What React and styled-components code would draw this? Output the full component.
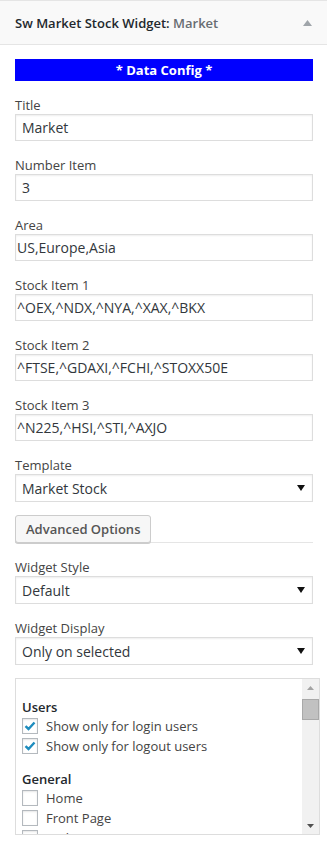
import React from 'react';
import styled, { createGlobalStyle } from 'styled-components';

const GlobalStyle = createGlobalStyle`
    html, body {
        margin: 0;
        padding: 0;
        background: #fff;
        font-family: "Open Sans", "Liberation Sans", sans-serif;
        color: #444;
    }
    * { box-sizing: border-box; }
`

const Widget = styled.div`
    width: 327px;
    background: #fff;
`

const Header = styled.div`
    height: 45px;
    display: flex;
    align-items: center;
    justify-content: space-between;
    padding: 0 15px;
    background: #f9f9f9;
    border-top: 1px solid #e5e5e5;
    border-bottom: 1px solid #e5e5e5;
`

const HeaderTitle = styled.h3`
    margin: 0;
    font-size: 13px;
    font-weight: 600;
    color: #23282d;
    line-height: 20px;
`

const TitleSuffix = styled.span`
    color: #686d72;
`

const Body = styled.div`
    padding: 14px 14px 0 15px;
`

const Banner = styled.div`
    height: 22px;
    background: #0000ff;
    color: #fff;
    font-size: 13px;
    font-weight: 700;
    text-align: center;
    line-height: 22px;
    margin-bottom: 15px;
`

const Field = styled.div`
    margin-bottom: ${p => p.$gap ?? 15}px;
`

const Label = styled.label`
    display: block;
    font-size: 13px;
    line-height: 18px;
    color: #444;
`

const Input = styled.input`
    display: block;
    width: 100%;
    height: 27px;
    margin: 0;
    padding: 0 ${p => p.$pad}px;
    border: 1px solid #ddd;
    box-shadow: inset 0 1px 2px rgba(0,0,0,0.07);
    background: #fff;
    font-family: inherit;
    font-size: 14px;
    color: #32373c;
    outline: none;
`

const SelectWrap = styled.div`
    position: relative;
`

const Select = styled.select`
    display: block;
    width: 100%;
    height: 28px;
    margin: 0;
    padding: 0 6px;
    border: 1px solid #ddd;
    border-radius: 0;
    box-shadow: inset 0 1px 2px rgba(0,0,0,0.07);
    background: #fff;
    font-family: inherit;
    font-size: 14px;
    color: #32373c;
    appearance: none;
    outline: none;
`

const Caret = styled.svg`
    position: absolute;
    right: 8px;
    top: 11px;
    pointer-events: none;
`

const ButtonRow = styled.div`
    border-bottom: 1px solid #e5e5e5;
    margin-bottom: 15px;
`

const Button = styled.button`
    display: block;
    height: 28px;
    margin-bottom: -1px;
    padding: 0 10px;
    border: 1px solid #ccc;
    border-radius: 3px;
    background: #f7f7f7;
    box-shadow: 0 1px 0 #ccc;
    font-family: inherit;
    font-size: 13px;
    font-weight: 600;
    color: #555;
`

const ListBox = styled.div`
    display: flex;
    height: 157px;
    width: 305px;
    border: 1px solid #ddd;
    overflow: hidden;
`

const ListContent = styled.div`
    flex: 1;
    padding: 19px 0 0 6px;
    overflow: hidden;
`

const GroupTitle = styled.div`
    font-size: 13px;
    font-weight: 600;
    line-height: 18px;
    color: #23282d;
    margin-top: ${p => p.$first ? 0 : 14}px;
`

const CheckRow = styled.label`
    display: flex;
    align-items: center;
    height: 20px;
    font-size: 13px;
    color: #444;
`

const Box = styled.span`
    width: 16px;
    height: 16px;
    margin-right: 8px;
    border: 1px solid #b4b9be;
    box-shadow: inset 0 1px 2px rgba(0,0,0,0.1);
    background: #fff;
    display: flex;
    align-items: center;
    justify-content: center;
    flex-shrink: 0;
`

const Scrollbar = styled.div`
    width: 17px;
    background: #f1f1f1;
    display: flex;
    flex-direction: column;
    align-items: center;
`

const ArrowCell = styled.div`
    height: 17px;
    width: 100%;
    display: flex;
    align-items: center;
    justify-content: center;
`

const Thumb = styled.div`
    width: 17px;
    height: 21px;
    background: #c1c1c1;
    border: 1px solid #a9a9a9;
    margin-top: 3px;
`

const Track = styled.div`
    flex: 1;
`

function Check({ checked }) {
    return (
        <Box>
            {checked && (
                <svg width="12" height="10" viewBox="0 0 12 10">
                    <path d="M1.5 5.2 L4.5 8 L10.5 1.5" fill="none" stroke="#1e8cbe" strokeWidth="2.4" strokeLinejoin="miter" />
                </svg>
            )}
        </Box>
    )
}

function Dropdown({ value }) {
    return (
        <SelectWrap>
            <Select defaultValue={value}>
                <option>{value}</option>
            </Select>
            <Caret width="8" height="6" viewBox="0 0 8 6">
                <path d="M0 0 L8 0 L4 6 Z" fill="#111" />
            </Caret>
        </SelectWrap>
    )
}

const fields = [
    { label: 'Title', value: 'Market', pad: 6 },
    { label: 'Number Item', value: '3', pad: 6 },
    { label: 'Area', value: 'US,Europe,Asia', pad: 1 },
    { label: 'Stock Item 1', value: '^OEX,^NDX,^NYA,^XAX,^BKX', pad: 1 },
    { label: 'Stock Item 2', value: '^FTSE,^GDAXI,^FCHI,^STOXX50E', pad: 1 },
    { label: 'Stock Item 3', value: '^N225,^HSI,^STI,^AXJO', pad: 1 },
]

export default function App() {
    return (
        <Widget>
            <GlobalStyle />
            <Header>
                <HeaderTitle>Sw Market Stock Widget: <TitleSuffix>Market</TitleSuffix></HeaderTitle>
                <svg width="9" height="6" viewBox="0 0 9 6">
                    <path d="M0 6 L4.5 0 L9 6 Z" fill="#a0a5aa" />
                </svg>
            </Header>
            <Body>
                <Banner>* Data Config *</Banner>
                {fields.map(f => (
                    <Field key={f.label}>
                        <Label>{f.label}</Label>
                        <Input defaultValue={f.value} $pad={f.pad} />
                    </Field>
                ))}
                <Field $gap={13}>
                    <Label>Template</Label>
                    <Dropdown value="Market Stock" />
                </Field>
                <ButtonRow>
                    <Button>Advanced Options</Button>
                </ButtonRow>
                <Field>
                    <Label>Widget Style</Label>
                    <Dropdown value="Default" />
                </Field>
                <Field $gap={13}>
                    <Label>Widget Display</Label>
                    <Dropdown value="Only on selected" />
                </Field>
                <ListBox>
                    <ListContent>
                        <GroupTitle $first>Users</GroupTitle>
                        <CheckRow><Check checked />Show only for login users</CheckRow>
                        <CheckRow><Check checked />Show only for logout users</CheckRow>
                        <GroupTitle>General</GroupTitle>
                        <CheckRow><Check />Home</CheckRow>
                        <CheckRow><Check />Front Page</CheckRow>
                        <CheckRow><Check />Archives</CheckRow>
                    </ListContent>
                    <Scrollbar>
                        <ArrowCell>
                            <svg width="7" height="4" viewBox="0 0 7 4"><path d="M0 4 L3.5 0 L7 4 Z" fill="#a3a3a3" /></svg>
                        </ArrowCell>
                        <Thumb />
                        <Track />
                        <ArrowCell>
                            <svg width="7" height="4" viewBox="0 0 7 4"><path d="M0 0 L7 0 L3.5 4 Z" fill="#505050" /></svg>
                        </ArrowCell>
                    </Scrollbar>
                </ListBox>
            </Body>
        </Widget>
    )
}
